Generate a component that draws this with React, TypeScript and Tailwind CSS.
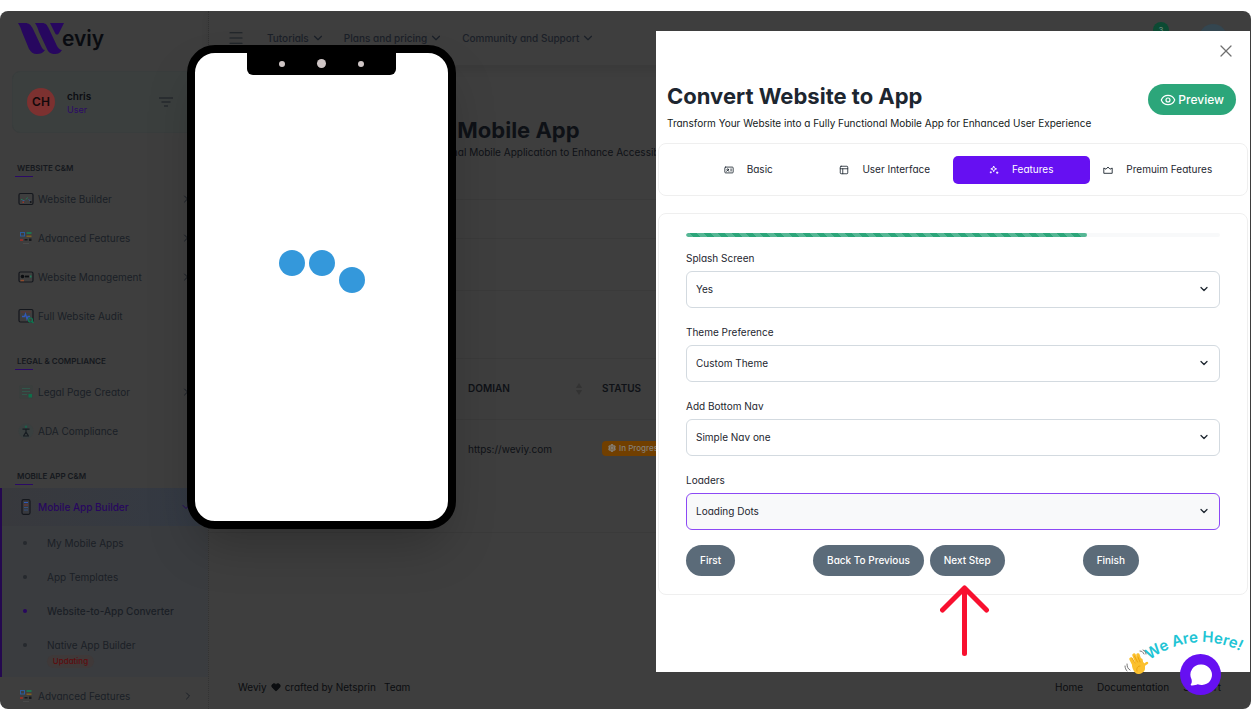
import type { ReactNode } from "react";
import { ChevronDown, ChevronRight, Eye, Heart, IdCard, Menu, PanelsTopLeft, Settings, X } from "lucide-react";
import clsx from "clsx";

type IconProps = { children: ReactNode };

const MenuIcon = ({ children }: IconProps) => (
  <svg viewBox="0 0 16 16" className="h-4 w-4 shrink-0" fill="none" aria-hidden="true">
    {children}
  </svg>
);

const BuilderIcon = () => (
  <MenuIcon>
    <rect x="1" y="2.500" width="14" height="11" rx="1.500" stroke="#14171d" strokeWidth="1.200" />
    <path d="M3 8.500h1.500M8 8.500l1.500-2" stroke="#1f7a58" />
    <path d="M4.500 9.500h2M10.500 8.500l2 1.500" stroke="#35588f" />
    <path d="M4.500 11.200h1.500" stroke="#9a342c" strokeWidth="1.500" />
    <path d="M12 11h1.500" stroke="#0b0d10" strokeWidth="1.500" />
  </MenuIcon>
);

const BlocksIcon = () => (
  <MenuIcon>
    <rect x="2.500" y="2.500" width="4" height="3.500" stroke="#2b5c9c" />
    <rect x="8.500" y="2" width="5" height="2" fill="#1e7350" />
    <rect x="8.500" y="5.500" width="5" height="1.500" fill="#7d5f20" />
    <rect x="2" y="9" width="3" height="2" fill="#8c2f28" />
    <rect x="6.500" y="9" width="3" height="1.500" fill="#17191d" />
    <rect x="11" y="8.500" width="2.500" height="2.500" fill="#17191d" />
    <path d="M5 13.500h6" stroke="#4a4a4a" />
  </MenuIcon>
);

const ManagementIcon = () => (
  <MenuIcon>
    <rect x="1" y="3" width="14" height="10" rx="1.500" stroke="#14171d" strokeWidth="1.200" />
    <circle cx="4.500" cy="7.500" r="1.800" fill="#0b0d10" />
    <path d="M7 7.500h4" stroke="#0b0d10" strokeWidth="1.800" />
    <path d="M12 7.500h1.500" stroke="#1f7a58" strokeWidth="2" />
    <path d="M2.500 11.500H6" stroke="#8f4a2c" strokeWidth="1.500" />
  </MenuIcon>
);

const AuditIcon = () => (
  <MenuIcon>
    <rect x="1" y="1.500" width="14" height="12.500" rx="1.500" stroke="#14171d" strokeWidth="1.200" />
    <path d="M3 4h10" stroke="#6b3434" strokeWidth="0.800" />
    <path d="M4 8.500h2.500l1-2.500 1.500 5 1-2.500h2" stroke="#3159b5" strokeWidth="1.300" />
    <circle cx="12.500" cy="12" r="2" stroke="#0f7a53" strokeWidth="1.200" />
    <path d="m14 13.500 1.500 1.500" stroke="#0f7a53" strokeWidth="1.300" />
  </MenuIcon>
);

const LegalIcon = () => (
  <MenuIcon>
    <rect x="1" y="1" width="14" height="14" rx="2" fill="#3a3e3d" />
    <path d="M4 4.500h8M4 7.500h8M4 10.500h5" stroke="#30564a" />
    <path d="M10.500 10h3.500v3.500h-3.500z" fill="#0f6f4a" />
  </MenuIcon>
);

const AdaIcon = () => (
  <MenuIcon>
    <circle cx="8" cy="8" r="7.500" fill="#393f3f" />
    <circle cx="8" cy="3.800" r="1.200" fill="#1d5f4b" />
    <path d="M4.500 6.200h7M8 5.500v4M8 9l-2.500 4M8 9l2.500 4M5 13h6" stroke="#171d22" strokeWidth="1.200" />
  </MenuIcon>
);

const PhoneIcon = () => (
  <MenuIcon>
    <rect x="4" y="0.700" width="8" height="14.600" rx="1.500" stroke="#14171d" strokeWidth="1.200" />
    <path d="M6 3.500h4" stroke="#3159b5" />
    <path d="M6 6h4" stroke="#7a3636" />
    <path d="M6 8.500h4M6 11h4" stroke="#34517f" />
  </MenuIcon>
);

const SparkleTabIcon = () => (
  <svg viewBox="0 0 10 10" className="h-2.5 w-2.5 shrink-0" fill="none" stroke="currentColor" strokeWidth="0.900" strokeLinejoin="round" aria-hidden="true">
    <path d="M4.700 1 5.500 3.100 7.600 3.900 5.500 4.700 4.700 6.800 3.900 4.700 1.800 3.900 3.900 3.100z" />
    <path d="M1.800 6.300v2M.8 7.300h2M8.200 6.500v2.400M7 7.700h2.400" />
  </svg>
);

const CrownTabIcon = () => (
  <svg viewBox="0 0 10 10" className="h-2.5 w-2.5 shrink-0" fill="none" stroke="currentColor" strokeWidth="0.900" strokeLinejoin="round" aria-hidden="true">
    <path d="M.8 3 3 4.200 5 2l2 2.200L9.200 3v5.300H.8z" />
  </svg>
);

const CardTabIcon = () => <IdCard className="h-2.5 w-2.5 shrink-0" strokeWidth={2} />;

const LayoutTabIcon = () => <PanelsTopLeft className="h-2.5 w-2.5 shrink-0" strokeWidth={2} />;

const sections = [
  {
    title: "WEBSITE C&M",
    items: [
      { label: "Website Builder", icon: <BuilderIcon />, arrow: true },
      { label: "Advanced Features", icon: <BlocksIcon />, arrow: true },
      { label: "Website Management", icon: <ManagementIcon />, arrow: true },
      { label: "Full Website Audit", icon: <AuditIcon />, arrow: false },
    ],
  },
  {
    title: "LEGAL & COMPLIANCE",
    items: [
      { label: "Legal Page Creator", icon: <LegalIcon />, arrow: true },
      { label: "ADA Compliance", icon: <AdaIcon />, arrow: false },
    ],
  },
];

const subPages = [
  { label: "My Mobile Apps" },
  { label: "App Templates" },
  { label: "Website-to-App Converter", active: true },
  { label: "Native App Builder", badge: "Updating" },
];

const topLinks = ["Tutorials", "Plans and pricing", "Community and Support"];

const tabs = [
  { label: "Basic", icon: CardTabIcon },
  { label: "User Interface", icon: LayoutTabIcon },
  { label: "Features", icon: SparkleTabIcon, active: true },
  { label: "Premuim Features", icon: CrownTabIcon },
];

const fields = [
  { id: "splash", label: "Splash Screen", value: "Yes" },
  { id: "theme", label: "Theme Preference", value: "Custom Theme" },
  { id: "bottom-nav", label: "Add Bottom Nav", value: "Simple Nav one" },
  { id: "loaders", label: "Loaders", value: "Loading Dots", focused: true },
];

const SectionTitle = ({ children }: { children: ReactNode }) => (
  <div className="px-[15px]">
    <h2 className="px-0.5 pb-0.5 text-[8px] leading-3 font-semibold text-[#15181d]">{children}</h2>
    <div className="h-px w-[18px] bg-[#2b0a66]" />
  </div>
);

const Logo = () => (
  <a href="#home" className="flex h-8 items-center pl-[18px]" aria-label="Weviy">
    <svg viewBox="0 0 46 32" className="h-8 w-[46px]" fill="#27075f" aria-hidden="true">
      <path d="M0 0h7c4 0 6 2 8 6l8 17c1 2 2 4 4 4-2 3-5 4-8 4-4 0-6-2-8-5L4 9C3 6 2 3 0 0z" />
      <path d="M17 0h7c4 0 5 2 7 6l8 17c1 2 3 4 5 4-2 3-4 4-7 4-4 0-7-2-8-5L21 9c-1-3-2-6-4-9z" />
      <path d="M32 0h14l-5 10c-1 2-3 2-4 0z" />
    </svg>
    <span className="-ml-0.5 text-[21px] leading-8 font-semibold text-[#090b10]">eviy</span>
  </a>
);

const Sidebar = () => (
  <aside className="w-[209px] shrink-0 overflow-hidden border-r border-dotted border-[#333] pt-3">
    <Logo />
    <div className="mt-4 ml-3 flex h-[62px] items-center rounded-lg border border-[#393d3d] bg-[#3b3f3e] pl-3.5">
      <div className="flex h-7 w-7 items-center justify-center rounded-full bg-[#7c3130] text-xs font-semibold text-[#12090b]">
        CH
      </div>
      <div className="ml-3 flex-1">
        <p className="text-[10px] leading-4 font-semibold text-[#0b0d12]">chris</p>
        <p className="text-[9px] leading-3 text-[#2b0a66]">User</p>
      </div>
      <button type="button" aria-label="Filter menu" className="mr-[34px]">
        <svg viewBox="0 0 14 10" className="h-2.5 w-3.5" stroke="#1b1f25" strokeWidth="1.200" aria-hidden="true">
          <path d="M0 1h14M2.500 5h9M5 9h4" />
        </svg>
      </button>
    </div>
    <nav className="mt-[29px] flex flex-col gap-5">
      {sections.map((section) => (
        <section key={section.title}>
          <SectionTitle>{section.title}</SectionTitle>
          <ul className="mt-[3px] flex flex-col gap-px">
            {section.items.map((item) => (
              <li key={item.label}>
                <a href="#menu" className="flex h-[38px] items-center gap-1 pr-4 pl-[18px] text-[10px] text-[#1a1f26]">
                  {item.icon}
                  <span className="flex-1">{item.label}</span>
                  {item.arrow && <ChevronRight className="h-3 w-3" />}
                </a>
              </li>
            ))}
          </ul>
        </section>
      ))}
      <section>
        <SectionTitle>MOBILE APP C&amp;M</SectionTitle>
        <div className="mt-[3px] border-l-2 border-[#24084f] bg-[#3a3c3f]">
          <a
            href="#mobile"
            className="flex h-[38px] items-center gap-1 bg-linear-to-r from-[#38393d] to-[#343a44] pr-4 pl-4 text-[10px] font-medium text-[#27075f]"
          >
            <PhoneIcon />
            <span className="flex-1">Mobile App Builder</span>
            <ChevronDown className="h-3 w-3" />
          </a>
          <ul>
            {subPages.map((page) => (
              <li key={page.label} className={clsx("pl-[21px]", page.badge && "pb-[9px]")}>
                <a
                  href="#page"
                  className={clsx(
                    "flex items-center text-[10px] leading-4 text-[#1a1f26]",
                    page.badge ? "pt-[9px]" : "h-[34px]",
                    page.active && "font-medium",
                  )}
                >
                  <span className={clsx("mr-5 h-1 w-1 rounded-full", page.active ? "bg-[#27075f]" : "bg-[#25292e]")} />
                  {page.label}
                </a>
                {page.badge && (
                  <span className="mt-0.5 ml-6 block w-[47px] rounded-full bg-[#3f3939] text-center text-[8px] leading-[13px] font-medium text-[#5e0c0e]">
                    {page.badge}
                  </span>
                )}
              </li>
            ))}
          </ul>
        </div>
        <a href="#features" className="flex h-[38px] items-center gap-1 pr-3.5 pl-[18px] text-[10px] text-[#1a1f26]">
          <BlocksIcon />
          <span className="flex-1">Advanced Features</span>
          <ChevronRight className="h-3 w-3" />
        </a>
      </section>
    </nav>
  </aside>
);

const TopBar = () => (
  <header className="flex h-[55px] shrink-0 items-center border-b border-[#3a3a3a] pr-6 pl-[18px] shadow-[0_4px_8px_rgba(0,0,0,0.08)]">
    <button type="button" aria-label="Toggle sidebar" className="mr-[22px] text-[#1b2026]">
      <Menu className="h-[18px] w-[18px]" strokeWidth={1.500} />
    </button>
    <nav className="flex gap-[19px]">
      {topLinks.map((link) => (
        <a key={link} href="#top" className="flex items-center gap-0.5 text-[10px] font-medium text-[#1b2028]">
          {link}
          <ChevronDown className="h-3.5 w-3.5" />
        </a>
      ))}
    </nav>
    <div className="ml-auto flex items-center">
      <span className="flex h-4 w-4 -translate-y-2 items-center justify-center rounded-full bg-[#0c4a33] text-[8px] text-[#6f8a80]">
        3
      </span>
      <span className="ml-[30px] h-7 w-7 rounded-full bg-[#344650]" />
    </div>
  </header>
);

const AppsTable = () => (
  <table className="w-full table-fixed text-left text-[10px] text-[#0e1116]">
    <thead>
      <tr className="h-[60px] border-b border-[#3a3a3a]">
        <th className="w-[247px]" aria-label="App" />
        <th className="w-[134px] px-3 font-semibold">
          <span className="flex items-center justify-between">
            DOMIAN
            <svg viewBox="0 0 6 12" className="-mr-1 h-3 w-1.5" fill="#333" aria-hidden="true">
              <path d="M3 0 6 5H0zM3 12 0 7h6z" />
            </svg>
          </span>
        </th>
        <th className="px-3 font-semibold">STATUS</th>
      </tr>
    </thead>
    <tbody>
      <tr className="h-[113px] border-b border-[#3a3a3a] align-top">
        <td />
        <td className="px-3 pt-[21px] leading-4">https://weviy.com</td>
        <td className="px-3 pt-[21px]">
          <span className="inline-flex h-[15px] items-center gap-[3px] rounded bg-[#713f00] px-1.5 text-[8px] font-medium text-[#858078]">
            <Settings className="h-2 w-2" strokeWidth={4} />
            In Progress
          </span>
        </td>
      </tr>
    </tbody>
  </table>
);

const Phone = () => (
  <div className="absolute top-[34px] left-[187px] flex h-[484px] w-[269px] flex-col items-center rounded-[28px] border-8 border-black bg-white shadow-2xl">
    <div className="-mt-px flex h-[23px] w-[149px] items-center justify-evenly rounded-b-md bg-black">
      <span className="h-1.5 w-1.5 rounded-full bg-[#cfc6c6]" />
      <span className="h-[9px] w-[9px] rounded-full bg-[#cfc6c6]" />
      <span className="h-1.5 w-1.5 rounded-full bg-[#cfc6c6]" />
    </div>
    <div className="flex flex-1 gap-1 pt-[175px]" role="status" aria-label="Loading">
      <span className="h-[26px] w-[26px] rounded-full bg-[#3498db]" />
      <span className="h-[26px] w-[26px] rounded-full bg-[#3498db]" />
      <span className="mt-[17px] h-[26px] w-[26px] rounded-full bg-[#3498db]" />
    </div>
  </div>
);

const StepButton = ({ children }: { children: ReactNode }) => (
  <button type="button" className="h-[31px] rounded-full bg-[#5b6b79] px-3.5 text-[10px] font-medium text-white">
    {children}
  </button>
);

const ConverterDrawer = () => (
  <div
    role="dialog"
    aria-label="Convert Website to App"
    className="absolute top-5 right-px bottom-[37px] w-[594px] bg-white pr-0.5 pl-0.5 text-[#1d2630]"
  >
    <div className="flex h-10 items-center justify-end pr-3">
      <button type="button" aria-label="Close" className="text-[#6f6f6f]">
        <X className="h-5 w-5" strokeWidth={1.500} />
      </button>
    </div>
    <div className="flex h-[72px] items-start justify-between pr-3 pl-[9px]">
      <div className="pt-[11px]">
        <h1 className="text-[22px] leading-7 font-bold">Convert Website to App</h1>
        <p className="mt-[5px] text-[10px] leading-4 text-[#131920]">
          Transform Your Website into a Fully Functional Mobile App for Enhanced User Experience
        </p>
      </div>
      <button
        type="button"
        className="mt-[13px] flex h-[31px] items-center gap-0.5 rounded-full bg-[#2ca67a] px-3 text-xs font-medium text-white"
      >
        <Eye className="h-4 w-4" strokeWidth={1.800} />
        Preview
      </button>
    </div>

    <div role="tablist" className="flex h-[53px] items-center rounded-lg border border-[#efefef] px-[21px]">
      {tabs.map((tab) => (
        <button
          key={tab.label}
          type="button"
          role="tab"
          aria-selected={!!tab.active}
          className={clsx(
            "flex h-7 flex-1 items-center justify-center gap-[13px] rounded-[5px] text-[10px] whitespace-nowrap",
            tab.active && "bg-[#6610f2] text-white",
          )}
        >
          <tab.icon />
          {tab.label}
        </button>
      ))}
    </div>

    <form className="mt-[17px] rounded-lg border border-[#efefef] px-[27px] pt-[19px] pb-[18px]">
      <div className="h-1 overflow-hidden rounded-full bg-[#f8f9fa]">
        <div className="h-full w-3/4 rounded-full bg-[#2ca67a] bg-[repeating-linear-gradient(45deg,#56b795_0_5px,transparent_5px_10px)]" />
      </div>
      <div className="mt-[13px] flex flex-col gap-4">
        {fields.map((field) => (
          <div key={field.id}>
            <label htmlFor={field.id} className="block text-[10px] leading-4">
              {field.label}
            </label>
            <div className="relative mt-[5px]">
              <select
                id={field.id}
                defaultValue={field.value}
                className={clsx(
                  "h-[37px] w-full appearance-none rounded-md border px-[9px] text-[10px] outline-none",
                  field.focused ? "border-[#8c49f5] bg-[#f8f9fa]" : "border-[#d3dae0] bg-white",
                )}
              >
                <option>{field.value}</option>
              </select>
              <ChevronDown className="pointer-events-none absolute top-3 right-2.5 h-3 w-3" strokeWidth={2.500} />
            </div>
          </div>
        ))}
      </div>
      <div className="mt-[15px] flex gap-[78px]">
        <StepButton>First</StepButton>
        <div className="flex gap-1.5">
          <StepButton>Back To Previous</StepButton>
          <StepButton>Next Step</StepButton>
        </div>
        <StepButton>Finish</StepButton>
      </div>
    </form>

    <svg
      viewBox="0 0 50 72"
      className="absolute top-[554px] left-[284px] h-[72px] w-[50px]"
      fill="none"
      stroke="#f8102f"
      strokeWidth="5"
      strokeLinecap="round"
      strokeLinejoin="round"
      aria-hidden="true"
    >
      <path d="M24.500 68.500V3M2.500 25 24.500 3l22 22" />
    </svg>
  </div>
);

const ChatWidget = () => (
  <div className="absolute right-0 bottom-3.5 h-20 w-[131px]">
    <svg viewBox="0 -16 131 80" className="h-20 w-[131px]" aria-hidden="true">
      <path id="greeting" d="M29.700 29.300A84 84 0 0 1 146.300 41" fill="none" />
      <text fill="#20c4d4" fontSize="15" fontWeight="600">
        <textPath href="#greeting">We Are Here!</textPath>
      </text>
      <g strokeLinecap="round" fill="none" transform="translate(2 2)">
        <g stroke="#fbc02d" strokeWidth="3.500">
          <path d="m13 34-4-8M16 32l-4-10M19 31l-3-9M20 34l-1-7" />
          <path d="m21 37 1-5 3-2" strokeWidth="2.500" />
        </g>
        <path d="M10 32c2-3 10-5 12-2l1 5c0 4-4 6-7 6s-6-5-6-9z" fill="#fbc02d" />
        <path d="m13 30-3-5M15.500 29l-3-6M18 29l-2-5M15 38c-1-3 1-5 3-5" stroke="#e59600" strokeWidth="0.700" />
        <path d="M5 31c0 3 1 5 3 6M3 33c0 2 1 4 2 5M18 18c2 0 3 1 4 3M21 17c2 1 3 2 3 4" stroke="#777" />
      </g>
    </svg>
    <button
      type="button"
      aria-label="Open chat"
      className="absolute right-[30px] bottom-0 flex h-[41px] w-[41px] items-center justify-center rounded-full bg-[#6610f2]"
    >
      <svg viewBox="0 0 24 24" className="h-6 w-6" fill="#fff" aria-hidden="true">
        <path d="M12.500 1.500a10.300 10.300 0 1 1-3.800 19.800c-1.500.8-3.600 1.200-6.200 1.100-.8 0-1-.9-.5-1.400.9-1 .9-2.600.6-4.500A10.300 10.300 0 0 1 12.500 1.500z" />
      </svg>
    </button>
  </div>
);

const App = () => (
  <div className="h-screen bg-white py-[11px] font-['Inter','Liberation_Sans',sans-serif] [font-feature-settings:'cv11']">
    <div className="relative flex h-full overflow-hidden rounded-lg bg-[#3e3e3e]">
      <Sidebar />
      <div className="flex min-w-0 flex-1 flex-col">
        <TopBar />
        <main className="flex-1 text-[#0e1116]">
          <div className="h-[134px] border-b border-[#3a3a3a] pt-[50px] pl-[37px]">
            <h1 className="text-[22px] leading-7 font-bold">Convert Website to Mobile App</h1>
            <p className="text-[10px] leading-4">
              Transform Your Website into a Fully Functional Mobile Application to Enhance Accessibility
            </p>
          </div>
          <div className="h-[39px] border-b border-[#3a3a3a]" />
          <div className="h-[52px] border-b border-[#3a3a3a]" />
          <div className="h-[68px] border-b border-[#3a3a3a]" />
          <AppsTable />
        </main>
        <footer className="flex h-11 items-center justify-between pr-[30px] pl-[29px] text-[10px] text-[#0b0d10]">
          <p className="flex items-center gap-1">
            Weviy <Heart className="h-2.5 w-2.5 fill-current" /> crafted by Netsprin
            <a href="#team" className="ml-1">
              Team
            </a>
          </p>
          <nav className="flex gap-3.5">
            <a href="#home">Home</a>
            <a href="#documentation">Documentation</a>
            <a href="#support">Support</a>
          </nav>
        </footer>
      </div>
      <Phone />
      <ConverterDrawer />
      <ChatWidget />
    </div>
  </div>
);

export default App;
